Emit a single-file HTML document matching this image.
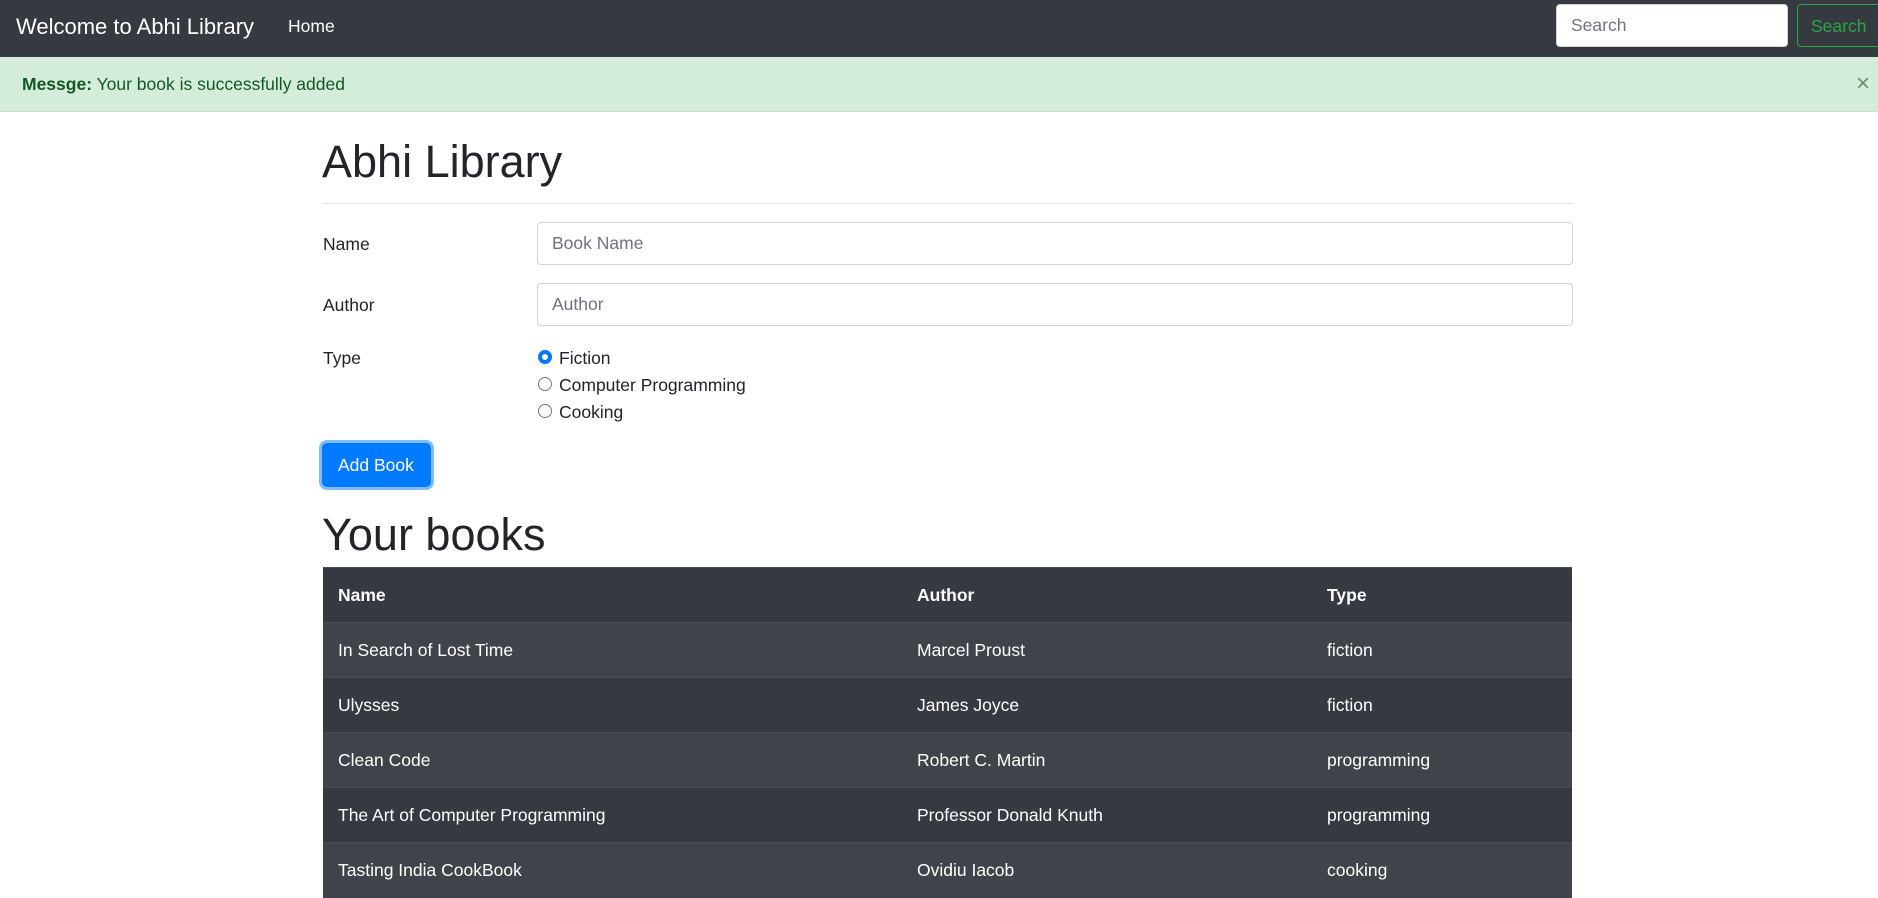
<!DOCTYPE html>
<html><head><meta charset="utf-8"><style>
*{box-sizing:border-box;margin:0;padding:0}
body{width:1878px;height:885px;overflow:hidden;background:#fff;font-family:"Liberation Sans",sans-serif;color:#212529;font-size:17.5px;position:relative}
.nav{position:absolute;left:0;top:0;width:1878px;height:57px;background:#343a40}
.abs{position:absolute;white-space:nowrap}
.alert{position:absolute;left:0;top:57px;width:1878px;height:55px;background:#d4edda;border-bottom:1px solid #c3e6cb;color:#155724}
.inp{position:absolute;border:1px solid #ced4da;border-radius:4px;background:#fff;color:#6c757d;padding-left:14px;display:flex;align-items:center;font-size:17.5px}
.radio{position:absolute;width:14px;height:14px;border:1px solid #767676;border-radius:50%;background:#fff}
table{position:absolute;left:323px;top:567px;width:1249px;border-collapse:collapse;color:#fff;font-size:17.5px}
td,th{height:55px;text-align:left;padding-left:15px;border-top:1px solid #454d55;background:#343a40}
th{font-weight:bold}
tr:nth-child(even) td{background:#3e444a}
</style></head><body>
<div class="nav">
<div class="abs" style="left:16px;top:14px;color:#fff;font-size:22px">Welcome to Abhi Library</div>
<div class="abs" style="left:288px;top:16px;color:#fff;font-size:17.5px">Home</div>
<div class="inp" style="left:1556px;top:4px;width:232px;height:43px">Search</div>
<div class="abs" style="left:1797px;top:4px;width:90px;height:43px;border:1px solid #28a745;border-radius:4px;color:#28a745;padding:11px 0 0 13px;font-size:17.5px">Search</div>
</div>
<div class="alert">
<div class="abs" style="left:22px;top:17px"><b>Messge:</b> Your book is successfully added</div>
<div class="abs" style="left:1856px;top:13px;font-size:24px;color:#6a8f72">×</div>
</div>
<div class="abs" style="left:322px;top:136px;font-size:45px;font-weight:500">Abhi Library</div>
<div class="abs" style="left:323px;top:203px;width:1249px;height:1px;background:#e2e2e2"></div>
<div class="abs" style="left:323px;top:234px">Name</div>
<div class="inp" style="left:537px;top:222px;width:1036px;height:43px">Book Name</div>
<div class="abs" style="left:323px;top:295px">Author</div>
<div class="inp" style="left:537px;top:283px;width:1036px;height:43px">Author</div>
<div class="abs" style="left:323px;top:348px">Type</div>
<div class="radio" style="left:538px;top:350px;border:4px solid #0075ff"></div>
<div class="abs" style="left:559px;top:348px">Fiction</div>
<div class="radio" style="left:538px;top:377px"></div>
<div class="abs" style="left:559px;top:375px">Computer Programming</div>
<div class="radio" style="left:538px;top:404px"></div>
<div class="abs" style="left:559px;top:402px">Cooking</div>
<div class="abs" style="left:322px;top:443px;width:109px;height:44px;background:#007bff;border-radius:5px;box-shadow:0 0 0 3px #80bdff;color:#fff;padding:12px 0 0 16px">Add Book</div>
<div class="abs" style="left:322px;top:509px;font-size:45px;font-weight:500">Your books</div>
<table>
<tr><th style="width:579px">Name</th><th style="width:410px">Author</th><th>Type</th></tr>
<tr><td>In Search of Lost Time</td><td>Marcel Proust</td><td>fiction</td></tr>
<tr><td>Ulysses</td><td>James Joyce</td><td>fiction</td></tr>
<tr><td>Clean Code</td><td>Robert C. Martin</td><td>programming</td></tr>
<tr><td>The Art of Computer Programming</td><td>Professor Donald Knuth</td><td>programming</td></tr>
<tr><td>Tasting India CookBook</td><td>Ovidiu Iacob</td><td>cooking</td></tr>
</table>
</body></html>
